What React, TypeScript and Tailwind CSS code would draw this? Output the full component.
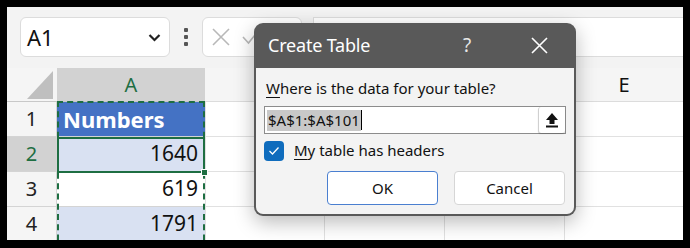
import React from "react";

const ui = { fontFamily: '"Noto Sans", "Open Sans", Arial, sans-serif' };

function UploadIcon() {
  return (
    <svg width="14" height="16" viewBox="0 0 14 16">
      <path d="M7 1 L13 8 L9.5 8 L9.5 12 L4.5 12 L4.5 8 L1 8 Z" fill="#111" />
      <rect x="1" y="13.5" width="12" height="2" fill="#111" />
    </svg>
  );
}

function Row({
  num,
  active,
  children,
  cellClass,
  h,
}: {
  num: string;
  active?: boolean;
  children?: React.ReactNode;
  cellClass: string;
  h: string;
}) {
  return (
    <div className={`flex ${h}`}>
      <div
        className={`w-[50px] shrink-0 flex items-center justify-center text-[20px] border-b border-r border-[#d4d4d4] ${
          active ? "bg-[#d2d2d2] text-[#1e6e42]" : "bg-[#f5f5f5] text-[#222]"
        }`}
      >
        {num}
      </div>
      <div className={`w-[148px] shrink-0 flex items-center justify-end pr-[7px] text-[21px] border-b border-[#d4d4d4] ${cellClass}`}>
        {children}
      </div>
      <div className="w-[120px] shrink-0 border-b border-r border-l border-[#e1e1e1] bg-white" />
      <div className="w-[120px] shrink-0 border-b border-r border-[#e1e1e1] bg-white" />
      <div className="w-[120px] shrink-0 border-b border-r border-[#e1e1e1] bg-white" />
      <div className="flex-1 border-b border-[#e1e1e1] bg-white" />
    </div>
  );
}

export default function App() {
  return (
    <div className="w-[690px] h-[248px] bg-black pt-[7px] pl-[7px] pr-[7px] pb-[8px]" style={ui}>
      <div className="relative w-full h-full bg-white overflow-hidden">
        {/* toolbar */}
        <div className="h-[61px] bg-[#f3f3f3] flex items-start pt-[10px]">
          <div className="ml-[13px] w-[150px] h-[40px] bg-white border border-[#dcdcdc] rounded-[6px] flex items-center pl-[6px] pr-[8px]">
            <span className="text-[22px] text-[#111] flex-1">A1</span>
            <svg width="13" height="9" viewBox="0 0 13 9">
              <path d="M1.5 2 L6.5 7 L11.5 2" stroke="#222" strokeWidth="2.2" fill="none" />
            </svg>
          </div>
          <div className="w-[32px] h-[40px] flex flex-col items-center justify-center gap-[3px]">
            <div className="w-[4px] h-[4px] bg-[#555] rounded-[1px]" />
            <div className="w-[4px] h-[4px] bg-[#555] rounded-[1px]" />
            <div className="w-[4px] h-[4px] bg-[#555] rounded-[1px]" />
          </div>
          <div className="w-[100px] h-[40px] bg-white border border-[#dcdcdc] rounded-[6px] flex items-center pl-[9px] gap-[12px]">
            <svg width="18" height="18" viewBox="0 0 18 18">
              <path d="M1 1 L17 17 M17 1 L1 17" stroke="#b8b8b8" strokeWidth="1.6" />
            </svg>
            <svg width="18" height="18" viewBox="0 0 18 18">
              <path d="M1 9 L6.5 15 L17 2" stroke="#b8b8b8" strokeWidth="1.6" fill="none" />
            </svg>
          </div>
          <div className="ml-[11px] flex-1 h-[40px] bg-white border-t border-b border-l border-[#dcdcdc]" />
        </div>
        {/* column headers */}
        <div className="flex h-[34px] bg-[#f5f5f5]">
          <div className="w-[50px] shrink-0 flex items-end justify-end pb-[2px] pr-[4px] border-b border-[#c8c8c8]">
            <svg width="26" height="28" viewBox="0 0 26 28">
              <path d="M26 0 L26 28 L0 28 Z" fill="#bfbfbf" />
            </svg>
          </div>
          <div className="w-[148px] shrink-0 bg-[#d2d2d2] flex items-center justify-center text-[20px] text-[#1e6e42] border-b border-[#c8c8c8]">
            A
          </div>
          <div className="w-[120px] shrink-0 border-b border-r border-[#dcdcdc]" />
          <div className="w-[120px] shrink-0 border-b border-r border-[#dcdcdc]" />
          <div className="w-[120px] shrink-0 border-b border-r border-[#dcdcdc]" />
          <div className="flex-1 flex items-center justify-center text-[20px] text-[#111] border-b border-[#dcdcdc]">E</div>
        </div>
        <Row num="1" h="h-[35px]" cellClass="bg-[#4472c4] !justify-start pl-[6px]">
          <span className="text-white font-bold text-[22px]">Numbers</span>
        </Row>
        <Row num="2" h="h-[35px]" active cellClass="bg-[#d9e1f2] text-[#111]">
          1640
        </Row>
        <Row num="3" h="h-[35px]" cellClass="bg-white text-[#111]">
          619
        </Row>
        <Row num="4" h="h-[35px]" cellClass="bg-[#d9e1f2] text-[#111]">
          1791
        </Row>

        {/* marching ants selection */}
        <div className="absolute left-[50px] top-[94px] w-[148px] h-[160px] border-2 border-dashed border-[#1e6e42]" />
        {/* active cell */}
        <div className="absolute left-[50px] top-[130px] w-[148px] h-[36px] border-2 border-[#1e6e42]" />
        <div className="absolute left-[194px] top-[162px] w-[7px] h-[7px] bg-[#1e6e42] border border-white" />

        {/* dialog */}
        <div className="absolute left-[247px] top-[16px] w-[322px] h-[193px] rounded-[9px] bg-[#595959] p-[2px] pt-0 shadow-[0_6px_20px_rgba(0,0,0,0.28)] flex flex-col">
          <div className="h-[45px] shrink-0 flex items-center pl-[12px] text-white">
            <span className="text-[18px] flex-1 tracking-[-0.2px]">Create Table</span>
            <span className="text-[19px] text-[#e8e8e8] w-[20px] text-center mr-[54px]">?</span>
            <svg width="17" height="17" viewBox="0 0 17 17" className="mr-[26px]">
              <path d="M1 1 L16 16 M16 1 L1 16" stroke="#fff" strokeWidth="1.6" />
            </svg>
          </div>
          <div className="flex-1 bg-[#f3f3f3] rounded-b-[7px] px-[8px] pt-[10px]">
            <div className="text-[15px] text-[#111] leading-[20px] pl-[2px]">
              <span className="underline underline-offset-[3px]">W</span>here is the data for your table?
            </div>
            <div className="mt-[8px] h-[28px] bg-white border border-[#8c8c8c] flex items-center">
              <div className="flex-1 flex items-center pl-[2px]">
                <span className="bg-[#c8c8c8] text-[15px] text-[#111] leading-[21px] px-[1px]">$A$1:$A$101</span>
                <span className="w-[1px] h-[20px] bg-black" />
              </div>
              <div className="w-[27px] h-[26px] bg-white border-l border-[#d0d0d0] rounded-[3px] shadow-[0_1px_1px_rgba(0,0,0,0.2)] flex items-center justify-center">
                <UploadIcon />
              </div>
            </div>
            <div className="mt-[6px] flex items-center h-[21px]">
              <div className="w-[20px] h-[20px] rounded-[4px] bg-[#0f6cbd] flex items-center justify-center">
                <svg width="12" height="10" viewBox="0 0 12 10">
                  <path d="M1.5 5 L4.5 8 L10.5 1.5" stroke="#fff" strokeWidth="1.3" fill="none" />
                </svg>
              </div>
              <span className="ml-[10px] text-[15px] text-[#111]">
                <span className="underline underline-offset-[3px]">M</span>y table has headers
              </span>
            </div>
            <div className="mt-[10px] flex justify-end gap-[16px] pr-[1px]">
              <div className="w-[111px] h-[34px] bg-white border border-[#4a7fd0] rounded-[4px] flex items-center justify-center text-[15px] text-[#111]">
                OK
              </div>
              <div className="w-[111px] h-[34px] bg-white border border-[#d6d6d6] rounded-[4px] flex items-center justify-center text-[15px] text-[#111]">
                Cancel
              </div>
            </div>
          </div>
        </div>
      </div>
    </div>
  );
}
